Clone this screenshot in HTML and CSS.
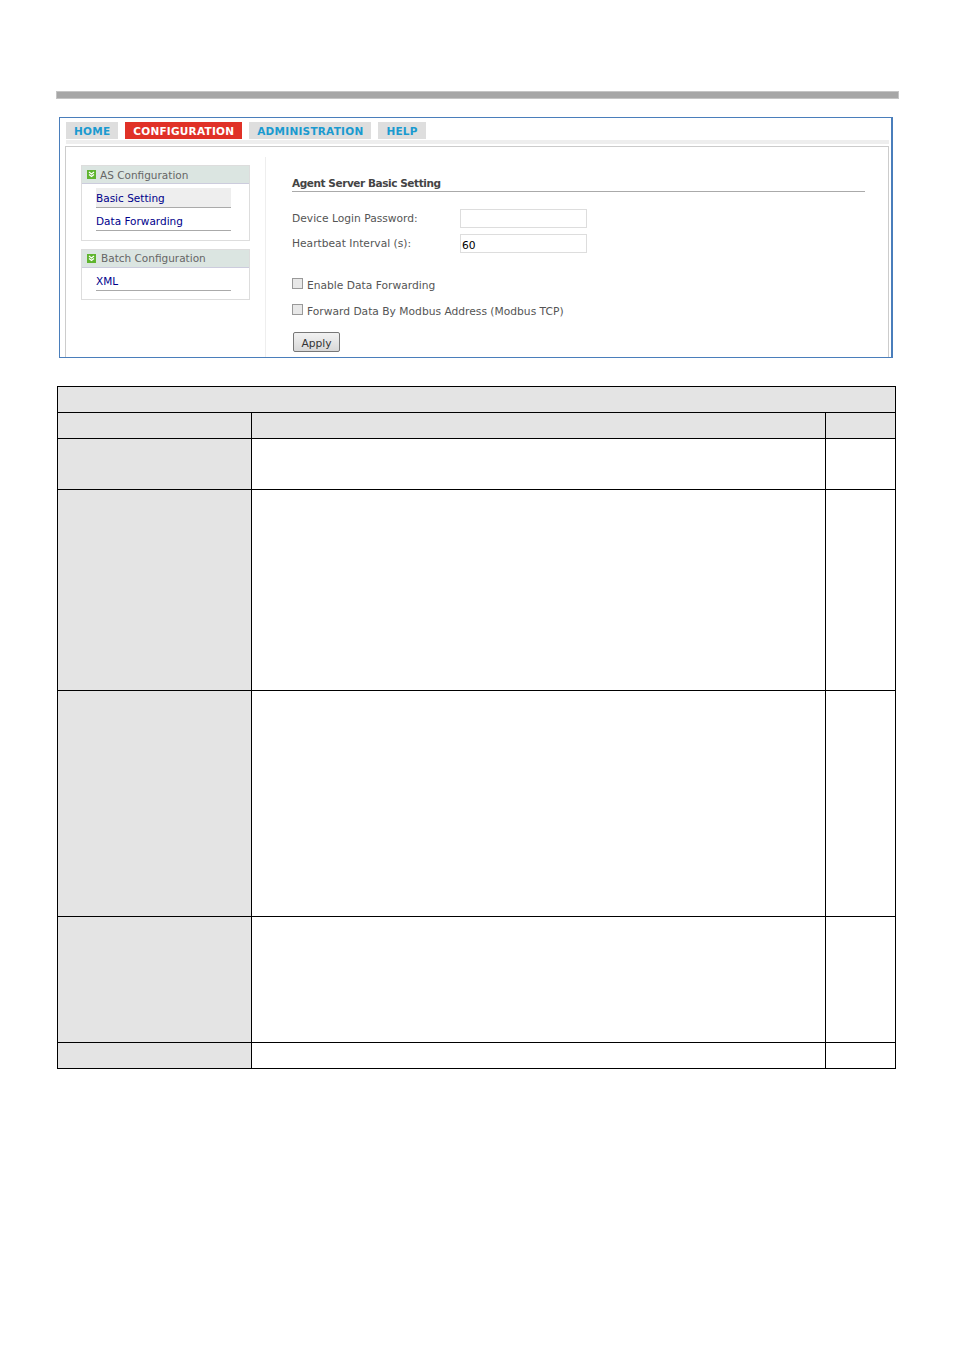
FILE: index.html
```html
<!DOCTYPE html>
<html lang="en">
<head>
    <meta charset="UTF-8">
    <title>Agent Server Basic Setting</title>
    <link rel="stylesheet" href="styles.css">
</head>
<body>
    <div class="page-rule"></div>

    <!-- Screenshot of the device web console -->
    <div class="console">
        <ul class="tabs">
            <li class="tab">HOME</li>
            <li class="tab active">CONFIGURATION</li>
            <li class="tab">ADMINISTRATION</li>
            <li class="tab">HELP</li>
        </ul>
        <div class="tab-strip"></div>

        <div class="panel">
            <div class="sidebar">
                <div class="side-box">
                    <div class="side-head">
                        <svg class="side-icon" viewBox="0 0 9 9"><rect width="9" height="9" fill="#5fb52e"/><path d="M2 2l2.5 2L7 2M2 4.5l2.5 2 2.5-2" fill="none" stroke="#fff" stroke-width="1.2"/></svg>
                        <span>AS Configuration</span>
                    </div>
                    <a href="#" class="side-link current">Basic Setting</a>
                    <a href="#" class="side-link">Data Forwarding</a>
                </div>
                <div class="side-box">
                    <div class="side-head">
                        <svg class="side-icon" viewBox="0 0 9 9"><rect width="9" height="9" fill="#5fb52e"/><path d="M2 2l2.5 2L7 2M2 4.5l2.5 2 2.5-2" fill="none" stroke="#fff" stroke-width="1.2"/></svg>
                        <span class="batch-label">Batch Configuration</span>
                    </div>
                    <a href="#" class="side-link short">XML</a>
                </div>
            </div>

            <div class="content">
                <h2 class="content-title">Agent Server Basic Setting</h2>
                <div class="field">
                    <label for="password">Device Login Password:</label>
                    <input type="text" id="password">
                </div>
                <div class="field">
                    <label for="heartbeat">Heartbeat Interval (s):</label>
                    <input type="text" id="heartbeat" value="60">
                </div>
                <div class="check first">
                    <span class="box"></span>
                    <span>Enable Data Forwarding</span>
                </div>
                <div class="check">
                    <span class="box"></span>
                    <span>Forward Data By Modbus Address (Modbus TCP)</span>
                </div>
                <button class="apply">Apply</button>
            </div>
        </div>
    </div>

    <!-- Empty parameter table -->
    <table class="params">
        <colgroup>
            <col class="col-name">
            <col>
            <col class="col-def">
        </colgroup>
        <tr class="row-head"><td colspan="3" class="shade"></td></tr>
        <tr class="row-head"><td class="shade"></td><td class="shade"></td><td class="shade"></td></tr>
        <tr class="row-a"><td class="shade"></td><td></td><td></td></tr>
        <tr class="row-b"><td class="shade"></td><td></td><td></td></tr>
        <tr class="row-c"><td class="shade"></td><td></td><td></td></tr>
        <tr class="row-d"><td class="shade"></td><td></td><td></td></tr>
        <tr class="row-head"><td class="shade"></td><td></td><td></td></tr>
    </table>
</body>
</html>
```
FILE: styles.css
```css
/* Global styles */
body {
    margin: 0;
    padding: 91px 0 0 0;
    background: #fff;
    font-family: "DejaVu Sans", Verdana, sans-serif;
    font-size: 10.7px;
    color: #555;
}

.page-rule {
    box-sizing: border-box;
    height: 8px;
    width: 843px;
    margin-left: 56px;
    background-color: #a6a6a6;
    border: 1px solid #c4c4c4;
}

/* Console frame */
.console {
    box-sizing: border-box;
    width: 834px;
    height: 241px;
    margin: 18px 0 0 59px;
    padding: 4px 0 0 6px;
    border: 1px solid #4a7ebb;
    border-right-width: 2px;
    overflow: hidden;
}

.tabs {
    display: flex;
    gap: 7px;
    margin: 0;
    padding: 0;
    list-style: none;
}

.tab {
    height: 17px;
    line-height: 18px;
    padding: 0 8px;
    background-color: #dedede;
    color: #1a9ad0;
    font-weight: bold;
    font-size: 10.5px;
    letter-spacing: 0.24px;
}

.tab.active {
    background-color: #e03127;
    color: #fff;
}

.tab-strip {
    width: 823px;
    height: 4px;
    background-color: #eee;
    margin-top: 1px;
}

.panel {
    display: flex;
    width: 824px;
    height: 220px;
    box-sizing: border-box;
    margin: 2px 0 0 -1px;
    border: 1px solid #ccc;
    border-bottom: none;
}

/* Sidebar */
.sidebar {
    box-sizing: border-box;
    width: 200px;
    height: 200px;
    margin-top: 10px;
    padding: 8px 0 0 15px;
    border-right: 1px solid #eee;
    font-size: 10.5px;
}

.side-box {
    width: 169px;
    box-sizing: border-box;
    border: 1px solid #ddd;
    margin-bottom: 8px;
}

.side-head {
    display: flex;
    align-items: center;
    gap: 4px;
    height: 17px;
    padding-left: 5px;
    background-color: #dbe5e1;
    border-bottom: 1px solid #ccd;
    color: #666;
}

.side-head span {
    margin-top: 1px;
}

.side-head .batch-label {
    margin: -1px 0 0 1px;
}

.side-icon {
    width: 9px;
    height: 9px;
}

.side-link {
    display: block;
    box-sizing: border-box;
    width: 135px;
    height: 20px;
    line-height: 20px;
    margin: 0 0 3px 14px;
    border-bottom: 1px solid #aaa;
    color: #00008b;
    text-decoration: none;
}

.side-head + .side-link {
    margin-top: 4px;
}

.side-link:last-child {
    margin-bottom: 9px;
}

.side-link.short {
    height: 19px;
    line-height: 18px;
    margin-bottom: 8px;
}

.side-link.current {
    background-color: #eee;
}

/* Form area */
.content {
    flex: 1;
    padding: 29px 23px 0 26px;
}

.content-title {
    margin: 0 0 17px 0;
    height: 15px;
    line-height: 14px;
    font-size: 10.5px;
    letter-spacing: -0.43px;
    font-weight: bold;
    color: #444;
    border-bottom: 1px solid #aaa;
}

.field {
    display: flex;
    align-items: center;
    height: 19px;
    margin-bottom: 6px;
}

.field label {
    width: 168px;
}

.field input {
    box-sizing: border-box;
    width: 127px;
    height: 19px;
    padding: 4px 1px 0 1px;
    border: 1px solid #ddd;
    font-family: "DejaVu Sans", Verdana, sans-serif;
    font-size: 10.7px;
    color: #000;
}

.check {
    display: flex;
    align-items: center;
    gap: 4px;
    height: 14px;
    margin-bottom: 12px;
}

.check.first {
    margin-top: 25px;
}

.box {
    box-sizing: border-box;
    width: 11px;
    height: 11px;
    margin-top: -3px;
    border: 1px solid #999;
    background-color: #e8e8e8;
}

.apply {
    display: block;
    box-sizing: border-box;
    width: 47px;
    height: 20px;
    margin: 14px 0 0 1px;
    padding: 2px 0 0 0;
    border: 1px solid #777;
    border-radius: 2px;
    background: linear-gradient(#f2f2f2, #d8d8d8);
    font-family: "DejaVu Sans", Verdana, sans-serif;
    font-size: 10.7px;
    color: #333;
}

/* Parameter table */
.params {
    width: 839px;
    margin: 28px 0 0 57px;
    border-collapse: collapse;
    table-layout: fixed;
}

.params td {
    padding: 0;
    border: 1px solid #000;
}

.params .shade {
    background-color: #e4e4e4;
}

.col-name {
    width: 194px;
}

.col-def {
    width: 70px;
}

.row-head td {
    height: 25px;
}

.row-a td {
    height: 50px;
}

.row-b td {
    height: 200px;
}

.row-c td {
    height: 225px;
}

.row-d td {
    height: 125px;
}
```
